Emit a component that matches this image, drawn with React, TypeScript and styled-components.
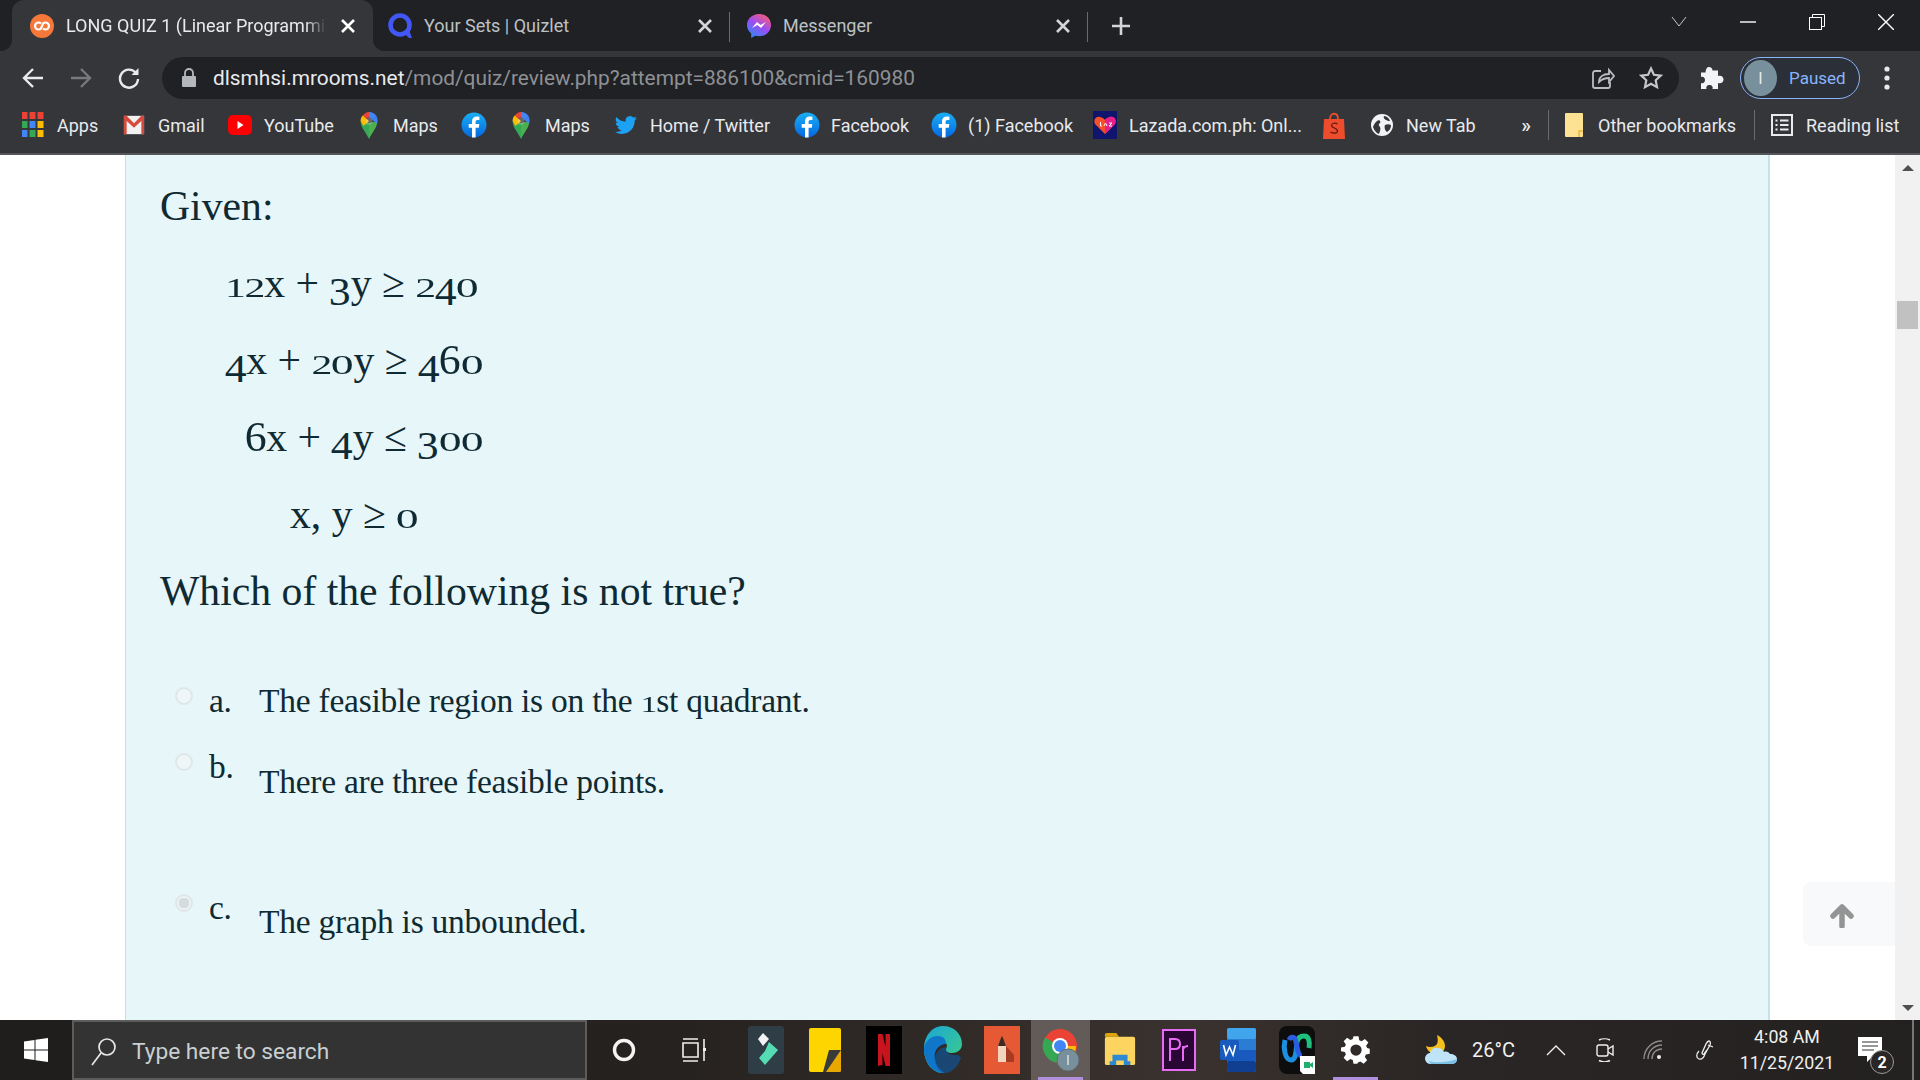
import { ReactNode } from "react";
import styled, { createGlobalStyle } from "styled-components";

const GlobalStyle = createGlobalStyle`
    html, body {
        margin: 0;
        padding: 0;
        background: #fff;
        overflow: hidden;
    }
`;

const UI_FONT = `Roboto, "Liberation Sans", sans-serif`;
const QUIZ_FONT = `"Liberation Serif", serif`;

const Screen = styled.div`
    width: 1920px;
    height: 1080px;
    display: flex;
    flex-direction: column;
    overflow: hidden;
    font-family: ${UI_FONT};
`;

/* ---------- tab strip ---------- */

const TabStrip = styled.div`
    height: 51px;
    flex: none;
    display: flex;
    padding-left: 12px;
    background: #202124;
`;

const Tab = styled.div<{ $width: number; $pad?: number; $active?: boolean; $sep?: boolean }>`
    position: relative;
    width: ${(p) => p.$width}px;
    box-sizing: border-box;
    display: flex;
    align-items: center;
    gap: 12px;
    padding: 0 15px 0 ${(p) => p.$pad ?? 18}px;
    font-size: 18px;
    color: ${(p) => (p.$active ? "#e8eaed" : "#bdc1c6")};
    background: ${(p) => (p.$active ? "#35363a" : "transparent")};
    border-radius: 12px 12px 0 0;

    &::before {
        content: "";
        display: ${(p) => (p.$active ? "block" : "none")};
        position: absolute;
        left: -12px;
        right: -12px;
        bottom: 0;
        height: 12px;
        background:
            radial-gradient(circle at 0 0, transparent 12px, #35363a 12.5px) left bottom / 12px 12px no-repeat,
            radial-gradient(circle at 100% 0, transparent 12px, #35363a 12.5px) right bottom / 12px 12px no-repeat;
    }

    &::after {
        content: "";
        display: ${(p) => (p.$sep ? "block" : "none")};
        position: absolute;
        right: 0;
        top: 12px;
        height: 30px;
        width: 1px;
        background: #6a6b6e;
    }
`;

const TabTitle = styled.div<{ $fade?: boolean }>`
    flex: 1;
    white-space: nowrap;
    overflow: hidden;
    ${(p) =>
        p.$fade &&
        `-webkit-mask-image: linear-gradient(90deg, #000 92%, transparent 100%);
         mask-image: linear-gradient(90deg, #000 92%, transparent 100%);`}
`;

const NewTab = styled.div`
    margin-left: 22px;
    width: 22px;
    display: flex;
    align-items: center;
    justify-content: center;
`;

const Spacer = styled.div`
    flex: 1;
`;

const WinButton = styled.div`
    width: 69px;
    height: 44px;
    display: flex;
    align-items: center;
    justify-content: center;
`;

/* ---------- toolbar ---------- */

const Toolbar = styled.div`
    height: 48px;
    flex: none;
    box-sizing: border-box;
    display: flex;
    padding: 6px 0 0 9px;
    background: #35363a;
`;

const NavButton = styled.div`
    width: 48px;
    height: 42px;
    display: flex;
    align-items: center;
    justify-content: center;
`;

const Omnibox = styled.div`
    width: 1517px;
    height: 42px;
    margin-left: 9px;
    box-sizing: border-box;
    display: flex;
    align-items: center;
    padding: 0 4px 0 19px;
    border-radius: 21px;
    background: #202124;
    font-size: 20.85px;
    white-space: nowrap;
`;

const Url = styled.div`
    margin-left: 16px;
    flex: 1;
    color: #8e9195;

    b {
        font-weight: 400;
        color: #e8eaed;
    }
`;

const Puzzle = styled(NavButton)`
    width: 44px;
    margin-left: 11px;
`;

const ProfilePill = styled.div`
    width: 120px;
    height: 42px;
    margin-left: 6px;
    box-sizing: border-box;
    display: flex;
    align-items: center;
    padding-left: 3px;
    gap: 12px;
    border: 1.5px solid #8ab4f8;
    border-radius: 21px;
    background: #2b3038;
    color: #8ab4f8;
    font-size: 17px;
`;

const Avatar = styled.div`
    width: 33px;
    height: 36px;
    border-radius: 50%;
    background: #78909c;
    color: #e8eaed;
    font-size: 16px;
    display: flex;
    align-items: center;
    justify-content: center;
`;

const MenuButton = styled(NavButton)`
    width: 54px;
`;

/* ---------- bookmarks ---------- */

const BookmarkBar = styled.div`
    height: 56px;
    flex: none;
    box-sizing: border-box;
    display: flex;
    align-items: center;
    padding: 0 0 2px 21px;
    background: #35363a;
    border-bottom: 2px solid #55565a;
    font-size: 18px;
    color: #e8eaed;
    white-space: nowrap;
`;

const Bookmark = styled.div<{ $width?: number; $offset?: number }>`
    width: ${(p) => (p.$width ? `${p.$width}px` : "auto")};
    margin-left: ${(p) => p.$offset ?? 0}px;
    display: flex;
    align-items: center;
    gap: 12px;
    flex: none;
`;

const BookmarkIcon = styled.div`
    width: 24px;
    flex: none;
    display: flex;
    justify-content: center;
`;

const BarSep = styled.div`
    width: 1px;
    height: 30px;
    background: #6a6b6e;
    flex: none;
`;

const Chevrons = styled.div`
    width: 19px;
    margin-right: 17px;
    text-align: right;
    font-size: 20px;
    font-weight: 500;
    line-height: 20px;
`;

/* ---------- page ---------- */

const Page = styled.div`
    position: relative;
    flex: 1;
    min-height: 0;
    display: flex;
    background: #fff;
`;

const Gutter = styled.div<{ $width: number }>`
    width: ${(p) => p.$width}px;
    flex: none;
`;

const Panel = styled.div`
    width: 1645px;
    flex: none;
    box-sizing: border-box;
    padding: 12px 0 0 34px;
    background: #e7f6f8;
    border-left: 1px solid #c4e2e8;
    border-right: 2px solid #c4e2e8;
    color: #0f2a33;
    font-family: ${QUIZ_FONT};
    overflow: hidden;
`;

const QuizLine = styled.div<{ $indent?: number }>`
    height: 77px;
    line-height: 78px;
    font-size: 41.7px;
    padding-left: ${(p) => p.$indent ?? 0}px;
    white-space: nowrap;
`;

const Options = styled.div`
    padding-top: 50px;
`;

const Option = styled.div<{ $height: number }>`
    height: ${(p) => p.$height}px;
    display: flex;
    align-items: flex-start;
    font-size: 33.5px;
    letter-spacing: -0.25px;
    line-height: 43px;
`;

const Radio = styled.div<{ $checked?: boolean }>`
    width: 18px;
    height: 18px;
    box-sizing: border-box;
    margin: 8px 16px 0 15px;
    border-radius: 50%;
    border: 2px solid #dfe6e8;
    background: ${(p) =>
        p.$checked
            ? "radial-gradient(circle, #d5dcde 0 5px, #eef4f5 5.5px)"
            : "#eef6f7"};
    flex: none;
`;

const OptionMark = styled.div`
    width: 50px;
    flex: none;
`;

const OptionText = styled.div<{ $drop?: number }>`
    margin-top: ${(p) => p.$drop ?? 0}px;
    white-space: nowrap;
`;

type NumKind = "zero" | "x" | "down" | "up";

const numShape: Record<NumKind, { width: number; transform: string }> = {
    zero: { width: 0.54, transform: "scale(1.1, 0.68)" },
    x: { width: 0.47, transform: "scale(1, 0.68)" },
    down: { width: 0.51, transform: "translateY(0.2em) scale(1.05, 0.95)" },
    up: { width: 0.51, transform: "scale(1.05, 1)" },
};

// Georgia's figures sit on the x-height, the installed serif has none, so they get reshaped here
const Num = styled.span<{ $kind: NumKind }>`
    display: inline-block;
    line-height: 1;
    text-align: center;
    width: ${(p) => numShape[p.$kind].width}em;
    transform-origin: 50% 83.75%;
    transform: ${(p) => numShape[p.$kind].transform};
`;

const BackToTop = styled.div`
    position: absolute;
    right: 25px;
    top: 727px;
    width: 92px;
    height: 64px;
    box-sizing: border-box;
    padding: 3px 14px 0 0;
    border-radius: 8px 0 0 8px;
    background: #f7f9fa;
    display: flex;
    align-items: center;
    justify-content: center;
`;

const Scrollbar = styled.div`
    width: 25px;
    flex: none;
    background: #f1f1f1;
    display: flex;
    flex-direction: column;
    align-items: center;
    justify-content: space-between;
    position: relative;
    padding: 10px 0 9px;
    box-sizing: border-box;
`;

const ScrollThumb = styled.div`
    position: absolute;
    left: 2px;
    top: 146px;
    width: 21px;
    height: 28px;
    background: #c1c1c1;
`;

/* ---------- taskbar ---------- */

const Taskbar = styled.div`
    height: 60px;
    flex: none;
    display: flex;
    align-items: stretch;
    background: linear-gradient(90deg, #1f1e1d 0%, #262220 35%, #3a322e 62%, #2a2625 75%, #232120 100%);
    color: #f0f0f0;
`;

const StartButton = styled.div`
    width: 72px;
    display: flex;
    align-items: center;
    justify-content: center;
`;

const SearchBox = styled.div`
    width: 515px;
    box-sizing: border-box;
    display: flex;
    align-items: center;
    gap: 15px;
    padding: 3px 0 0 17px;
    background: #333333;
    border: 2px solid #5c5c5c;
    font-size: 22.7px;
    color: #c9cfd2;
`;

const TaskSlot = styled.div<{ $width?: number; $active?: boolean; $running?: boolean }>`
    position: relative;
    width: ${(p) => p.$width ?? 59}px;
    flex: none;
    display: flex;
    align-items: center;
    justify-content: center;
    background: ${(p) => (p.$active ? "#625b57" : "transparent")};

    &::after {
        content: "";
        display: ${(p) => (p.$running ? "block" : "none")};
        position: absolute;
        left: 7px;
        right: 7px;
        bottom: 0;
        height: 3px;
        background: #b08fdc;
    }
`;

const Weather = styled.div`
    margin-left: 39px;
    width: 106px;
    flex: none;
    display: flex;
    align-items: center;
    gap: 14px;
    font-size: 20px;
`;

const Clock = styled.div`
    width: 106px;
    flex: none;
    display: flex;
    flex-direction: column;
    align-items: center;
    justify-content: center;
    gap: 4px;
    font-size: 17.8px;
    line-height: 22px;
`;

const TrayBadge = styled.div`
    position: absolute;
    left: 30px;
    top: 30px;
    width: 24px;
    height: 24px;
    border-radius: 50%;
    box-sizing: border-box;
    border: 1.5px solid #9a9a9a;
    background: #2a2625;
    color: #fff;
    font-size: 16px;
    font-weight: 700;
    display: flex;
    align-items: center;
    justify-content: center;
`;

const EdgeLine = styled.div`
    width: 2px;
    margin-left: 12px;
    background: #77757a;
    flex: none;
`;

/* ---------- icons ---------- */

const FB = () => (
    <svg width="26" height="26" viewBox="0 0 26 26" style={{ flex: "none" }}>
        <defs>
            <linearGradient id="fbg" x1="0" y1="0" x2="0" y2="1">
                <stop offset="0" stopColor="#19aff5" />
                <stop offset="1" stopColor="#0567e0" />
            </linearGradient>
        </defs>
        <circle cx="13" cy="13" r="12.5" fill="url(#fbg)" />
        <path d="M14.6 25.5V15.8h3.2l.5-3.7h-3.7V9.8c0-1.1.4-1.8 1.9-1.8h1.9V4.7c-.5-.1-1.500-.2-2.700-.2-2.800 0-4.700 1.700-4.700 4.800v2.800H7.700v3.700H11v9.700z" fill="#fff" />
    </svg>
);

const MapsPin = () => (
    <svg width="24" height="30" viewBox="0 0 24 32">
        <path d="M12 31C9 24 3 19 3 11.500L12 14z" fill="#34a853" />
        <path d="M12 31c3-7 9-12 9-19.500L12 14z" fill="#4caf50" />
        <path d="M3 11.500C3 9 4 7 5.500 5.500L12 12 6 17z" fill="#fbbc04" />
        <path d="M5.500 5.500C7 3.500 9.500 2 12 2v6a4 4 0 0 0-3 1.300z" fill="#ea4335" />
        <path d="M12 2c4 0 7.300 2.300 8.500 5.500L15 10a4 4 0 0 0-3-2z" fill="#4285f4" />
        <path d="M20.500 7.500c.5 1.200.5 2.500.5 4 0 1-.3 2-.7 3L15 10z" fill="#4285f4" />
        <circle cx="12" cy="12" r="3.800" fill="#fff" fillOpacity="0.25" />
    </svg>
);

const AppsGrid = () => (
    <svg width="22" height="28" viewBox="0 0 22 28">
        {["#ea4335", "#ea4335", "#ea4335", "#34a853", "#4285f4", "#fbbc04", "#4285f4", "#34a853", "#fbbc04"].map((c, i) => (
            <rect key={i} x={(i % 3) * 8 - 0.5} y={Math.floor(i / 3) * 9 + 1} width="6" height="7" fill={c} />
        ))}
    </svg>
);

const Gmail = () => (
    <svg width="22" height="22" viewBox="0 0 24 24">
        <rect x="1" y="2" width="22" height="20" fill="#f2f2f2" />
        <path d="M1 22V3h3v19zM20 22V3h3v19z" fill="#d54c3f" />
        <path d="M1 2h3l8 8 8-8h3v3l-11 10L1 5z" fill="#d54c3f" />
    </svg>
);

const YouTube = () => (
    <svg width="24" height="20" viewBox="0 0 24 20">
        <rect width="24" height="20" rx="5" fill="#f00" />
        <path d="M9.500 6v8l6-4z" fill="#fff" />
    </svg>
);

const Twitter = () => (
    <svg width="24" height="22" viewBox="0 0 24 24">
        <path
            fill="#1da1f2"
            d="M23.900 4.600a9.800 9.800 0 0 1-2.800.8 4.900 4.900 0 0 0 2.100-2.700 9.900 9.900 0 0 1-3.100 1.200 4.900 4.900 0 0 0-8.400 4.500A14 14 0 0 1 1.600 3.200a4.900 4.900 0 0 0 1.500 6.600 4.900 4.900 0 0 1-2.200-.6v.1a4.900 4.900 0 0 0 4 4.800 4.900 4.900 0 0 1-2.200.1 4.900 4.900 0 0 0 4.600 3.400A9.900 9.900 0 0 1 0 19.500a14 14 0 0 0 7.500 2.200c9.100 0 14-7.500 14-14v-.6a10 10 0 0 0 2.400-2.500z"
        />
    </svg>
);

const Lazada = () => (
    <svg width="24" height="28" viewBox="0 0 24 28">
        <rect width="24" height="28" fill="#0f146d" />
        <path d="M12 23 2 13c-2-4 1-8 5-7 2 .4 4 1.500 5 3 1-1.500 3-2.600 5-3 4-1 7 3 5 7z" fill="#f5502a" />
        <path d="M12 23 12 9c1-1.500 3-2.600 5-3 4-1 7 3 5 7z" fill="#e91e8c" />
        <path d="M7.500 11v4h1.500M11 15l1.500-3 1.500 3M16 12h3l-3 3h3" stroke="#fff" strokeWidth="1" fill="none" />
    </svg>
);

const Shopee = () => (
    <svg width="24" height="28" viewBox="0 0 24 28">
        <path d="M8 8c0-7 8-7 8 0" stroke="#ee4d2d" strokeWidth="1.800" fill="none" />
        <path d="M2 8h20l1 20H1z" fill="#ee4d2d" />
        <path d="M15.500 13c-2-1.500-6-1-6 1.500 0 3 6 2 6 5.500 0 2.500-4.500 2.800-7 1" stroke="#5a1a10" strokeWidth="1.200" fill="none" />
    </svg>
);

const Globe = () => (
    <svg width="22" height="22" viewBox="0 0 22 22">
        <circle cx="11" cy="11" r="11" fill="#f1f3f4" />
        <path d="M2 13c1-3 3-6 6-7 1 1 2 2 1 3-2 1-1 3 0 4 1 2 0 4-1 7-3-1-5-4-6-7zM13 2c3 .5 5 2 6 5-2 0-3-.5-4-1s-3-2-2-4zM14 11c2-1 4-1 6 0 0 3-1 5-4 7-2-1-3-5-2-7z" fill="#35363a" />
    </svg>
);

const ReadingList = () => (
    <svg width="22" height="24" viewBox="0 0 22 24" fill="none" stroke="#e8eaed" strokeWidth="2">
        <rect x="1" y="2" width="20" height="20" />
        <path d="M4.500 7.500h2M9 7.500h8.500M4.500 12h2M9 12h8.500M4.500 16.500h2M9 16.500h8.500" />
    </svg>
);

const FolderBookmark = () => (
    <svg width="18" height="24" viewBox="0 0 18 24">
        <path d="M0 1a1 1 0 0 1 1-1h16a1 1 0 0 1 1 1v22a1 1 0 0 1-1 1H1a1 1 0 0 1-1-1z" fill="#fde293" />
        <path d="M14 24v-6h4" fill="none" stroke="#e8b93a" strokeWidth="1.500" />
    </svg>
);

const CloseX = ({ bright }: { bright?: boolean }) => (
    <svg width="20" height="20" viewBox="0 0 20 20" stroke={bright ? "#fff" : "#d3d5d8"} strokeWidth="2.600" fill="none" style={{ flex: "none" }}>
        <path d="M4 4l12 12M16 4L4 16" />
    </svg>
);

const Infinity8 = () => (
    <svg width="24" height="24" viewBox="0 0 24 24" style={{ flex: "none" }}>
        <circle cx="12" cy="12" r="12" fill="#f5783a" />
        <path d="M11 9.500a3.500 3.500 0 1 0 0 5l2-5a3.500 3.500 0 1 1 0 5" fill="none" stroke="#fff" strokeWidth="2.200" />
    </svg>
);

const QuizletQ = () => (
    <svg width="24" height="28" viewBox="0 0 24 28" style={{ flex: "none" }}>
        <circle cx="12" cy="13" r="9.500" fill="none" stroke="#4257f5" strokeWidth="4.600" />
        <path d="M15 20l6 6h3l-3-8z" fill="#4257f5" />
    </svg>
);

const MessengerIcon = () => (
    <svg width="24" height="26" viewBox="0 0 24 26" style={{ flex: "none" }}>
        <defs>
            <linearGradient id="msg" x1="0.2" y1="1" x2="0.8" y2="0">
                <stop offset="0" stopColor="#2a8df8" />
                <stop offset="0.5" stopColor="#9a4df5" />
                <stop offset="1" stopColor="#fb5c74" />
            </linearGradient>
        </defs>
        <path d="M12 1C5 1 0 6 0 12c0 3.500 1.600 6.500 4.200 8.500V25l4-2.200c1.200.3 2.500.5 3.800.5 7 0 12-5 12-11.300S19 1 12 1z" fill="url(#msg)" />
        <path d="M5 15l5-6 3.500 3 5.500-3-5 6-3.500-3z" fill="#fff" />
    </svg>
);

const ChromeShare = () => (
    <svg width="24" height="24" viewBox="0 0 24 24" fill="none" stroke="#b9bcc0" strokeWidth="1.800">
        <path d="M10 5H4a2 2 0 0 0-2 2v13a2 2 0 0 0 2 2h13a2 2 0 0 0 2-2v-4" />
        <path d="M8 16c0-5 4-8 10-8V4l5 6-5 6v-4c-4 0-7 1-10 4z" fill="#202124" />
    </svg>
);

const StarOutline = () => (
    <svg width="24" height="24" viewBox="0 0 24 24" fill="none" stroke="#c4c7ca" strokeWidth="2.200">
        <path d="M12 2.500l2.900 6.300 6.800.8-5 4.700 1.300 6.800L12 17.700l-6 3.400 1.300-6.800-5-4.700 6.800-.8z" />
    </svg>
);

const PuzzleIcon = () => (
    <svg width="24" height="24" viewBox="0 0 24 24" fill="#f1f3f4">
        <path d="M9 1c2 0 3.500 1.500 3.500 3.500H18v5.500c3-1 5.500.5 5.500 3.500S21 18 18 17v6h-5.500c.8-2.500-1-4-3-4s-3.800 1.500-3 4H1v-6c2.500.8 4-1 4-3s-1.500-3.800-4-3V6.500h4.500C5.500 3 7 1 9 1z" />
    </svg>
);

const Windows = () => (
    <svg width="24" height="24" viewBox="0 0 24 24" fill="#fff">
        <path d="M0 3.500l10.500-1.500v9.500H0zM11.500 1.800L24 0v11.500H11.500zM0 12.500h10.500V22L0 20.500zM11.500 12.500H24V24l-12.500-1.800z" />
    </svg>
);

const SearchGlass = () => (
    <svg width="26" height="30" viewBox="0 0 26 30" fill="none" stroke="#e6e6e6" strokeWidth="1.700">
        <circle cx="16" cy="10" r="8" />
        <path d="M10 16L1 28" />
    </svg>
);

const TaskView = () => (
    <svg width="26" height="26" viewBox="0 0 26 26" fill="none" stroke="#f0f0f0" strokeWidth="1.600">
        <path d="M1 2h15M1 24h15M1 6h15v14H1zM22 2v22" />
        <rect x="21" y="11" width="3" height="3" fill="#f0f0f0" stroke="none" />
    </svg>
);

const Filmora = () => (
    <svg width="36" height="48" viewBox="0 0 36 48">
        <rect width="36" height="48" rx="3" fill="#2e3d46" />
        <path d="M15 7l6 6-6 7-5-7z" fill="#f4f4f4" />
        <path d="M21 16l9 8-13 15-6-7 6-7z" fill="#55dcb4" />
    </svg>
);

const StickyNotes = () => (
    <svg width="32" height="44" viewBox="0 0 32 44">
        <rect width="32" height="44" rx="2" fill="#ffd500" />
        <path d="M32 22v20a2 2 0 0 1-2 2H17z" fill="#e8a800" />
        <path d="M14 44l6-22h12L17 44z" fill="#3a3a38" />
    </svg>
);

const Netflix = () => (
    <svg width="36" height="48" viewBox="0 0 36 48">
        <rect width="36" height="48" fill="#000" />
        <path d="M12 8h4.500l7.500 32h-4.500zM12 8h4.500v31l-4.500 1zM19.500 8H24v32h-4.500z" fill="#c8141c" />
    </svg>
);

const Edge = () => (
    <svg width="38" height="48" viewBox="0 0 38 48">
        <defs>
            <linearGradient id="edg" x1="0" y1="0" x2="1" y2="1">
                <stop offset="0" stopColor="#1ba5d8" />
                <stop offset="1" stopColor="#3fd27e" />
            </linearGradient>
        </defs>
        <path d="M19 0c11 0 19 8 19 18 0 6-5 9-10 9-4 0-7-2-6-4 2-3 1-8-5-8-7 0-11 6-11 13 0 9 6 17 13 19C8 47 0 36 0 23 0 10 8 0 19 0z" fill="url(#edg)" />
        <path d="M0 23c0-5 5-13 14-13 6 0 8 4 8 8-4 0-13 4-11 15 1 7 6 12 10 14-12 1-21-11-21-24z" fill="#0f76c9" />
        <path d="M37 32c-3 9-10 15-16 15-6-1-10-7-10-14 0-6 5-12 11-12-1 5 4 8 8 8 3 0 5-1 7 3z" fill="#0c5aa6" fillOpacity="0.6" />
    </svg>
);

const Sketchbook = () => (
    <svg width="36" height="48" viewBox="0 0 36 48">
        <rect width="36" height="48" fill="#e55a34" />
        <path d="M14 36V20l4-8 4 8v16z" fill="#f3d4bc" />
        <path d="M17 12l1-2 1 2 3 8h-8z" fill="#3a2a22" />
        <path d="M22 20l8 9v7h-8z" fill="#a33c22" />
    </svg>
);

const ChromeRunning = () => (
    <svg width="38" height="48" viewBox="0 0 38 48">
        <circle cx="18" cy="20" r="17" fill="#ea4335" />
        <path d="M18 20L3 11.500A17 17 0 0 0 18 37l8-13z" fill="#34a853" />
        <path d="M18 20h16a17 17 0 0 1-16 17z" fill="#fbbc04" />
        <circle cx="18" cy="20" r="8" fill="#fff" />
        <circle cx="18" cy="20" r="6" fill="#4285f4" />
        <circle cx="26" cy="34" r="11" fill="#78909c" stroke="#5d6b73" />
        <path d="M26 29v10" stroke="#d5dadd" strokeWidth="1.600" />
    </svg>
);

const Explorer = () => (
    <svg width="32" height="34" viewBox="0 0 32 36">
        <path d="M0 2a2 2 0 0 1 2-2h10l3 4H0z" fill="#e0a40a" />
        <rect y="4" width="32" height="30" rx="2" fill="#fdd45f" />
        <path d="M5 34v-4h3v-7h16v7h3v4H20v-5h-8v5z" fill="#2d8ad2" />
    </svg>
);

const Premiere = () => (
    <svg width="34" height="42" viewBox="0 0 34 42">
        <rect x="1" y="1" width="32" height="40" fill="#2a0634" stroke="#e66cf5" strokeWidth="2" />
        <path d="M8 32V10h5c4 0 5 2 5 5s-1 5-5 5H8M21 32V17M21 20c1-2 3-3 5-3" fill="none" stroke="#e66cf5" strokeWidth="2" />
    </svg>
);

const Word = () => (
    <svg width="36" height="44" viewBox="0 0 36 44">
        <rect x="7" y="0" width="29" height="44" rx="2" fill="#2b7cd3" />
        <rect x="7" y="0" width="29" height="11" rx="2" fill="#41a5ee" />
        <rect x="7" y="22" width="29" height="11" fill="#185abd" />
        <rect x="7" y="33" width="29" height="11" rx="2" fill="#103f91" />
        <rect x="0" y="12" width="19" height="20" rx="2" fill="#185abd" />
        <path d="M3.500 17l2.500 10 3.500-8 3.500 8 2.500-10" stroke="#fff" strokeWidth="1.600" fill="none" />
    </svg>
);

const Webex = () => (
    <svg width="36" height="48" viewBox="0 0 36 48">
        <rect width="36" height="48" rx="8" fill="#0d0d0d" />
        <path d="M6 14c-2 8 0 20 6 20s5-12 6-18" fill="none" stroke="#1d8fe0" strokeWidth="5" />
        <path d="M18 16c1-5 4-6 7-6 5 0 6 6 5 12" fill="none" stroke="#1fbf7f" strokeWidth="5" />
        <path d="M10 14c2-4 6-4 7 2 1 5 2 14 6 14" fill="none" stroke="#2a5ce0" strokeWidth="5" />
        <path d="M21 30h15v18H24l-3-3z" fill="#fff" />
        <path d="M25 36h6v6h-6zM31 38l3-2v6l-3-2z" fill="#1fae6d" />
    </svg>
);

const Gear = () => (
    <svg width="30" height="30" viewBox="0 0 24 24">
        <path
            fill="#fff"
            fillRule="evenodd"
            d="M10 1h4l.6 3.100 1.900.8 2.600-1.800 2.800 2.800-1.800 2.600.8 1.900L23 11v4l-3.100.6-.8 1.900 1.800 2.600-2.800 2.800-2.600-1.800-1.900.8L13 23h-3l-.6-3.100-1.900-.8-2.600 1.800-2.800-2.800 1.800-2.600-.8-1.900L0 13V10l3.100-.6.800-1.900L2.100 4.900l2.800-2.800 2.600 1.800 1.900-.8zM12 7.500a4.500 4.500 0 1 0 0 9 4.500 4.500 0 0 0 0-9z"
        />
    </svg>
);

const WeatherIcon = () => (
    <svg width="34" height="30" viewBox="0 0 34 30">
        <path d="M2 11c4 2 9 1 11-2 1-2 1-5 0-9 4 2 8 6 8 11 0 6-6 9-11 8-4-1-7-4-8-8z" fill="#f4c01e" />
        <path d="M7 29a5.500 5.500 0 0 1-1-11c1-4 4-6 8-5 3 0 5 2 6 4 2-1 5 0 6 2 4 0 7 2 7 5s-2 5-6 5z" fill="#bfe3f7" />
        <path d="M7 29a6 6 0 0 1-2-3c5 2 18 2 28-2 0 3-3 5-6 5z" fill="#7cc0e6" />
    </svg>
);

const Notifications = () => (
    <svg width="24" height="26" viewBox="0 0 24 26" fill="#fff">
        <path d="M0 0h24v19H15l-6 6v-6H0z" />
        <path d="M4 5h16M4 9h16M4 13h12" stroke="#333" strokeWidth="1.200" />
    </svg>
);

const numKind = (digit: string): NumKind => {
    if (digit === "0") return "zero";
    if ("12".includes(digit)) return "x";
    return "68".includes(digit) ? "up" : "down";
};

const toOldStyle = (text: string): ReactNode[] =>
    text.split("").map((ch, i) =>
        /[0-9]/.test(ch) ? (
            <Num key={i} $kind={numKind(ch)}>
                {ch}
            </Num>
        ) : (
            ch
        )
    );

const bookmarks: { icon: ReactNode; label?: string; width: number }[] = [
    { icon: <AppsGrid />, label: "Apps", width: 101 },
    { icon: <Gmail />, label: "Gmail", width: 106 },
    { icon: <YouTube />, label: "YouTube", width: 129 },
    { icon: <MapsPin />, label: "Maps", width: 105 },
    { icon: <FB />, width: 47 },
    { icon: <MapsPin />, label: "Maps", width: 105 },
    { icon: <Twitter />, label: "Home / Twitter", width: 181 },
    { icon: <FB />, label: "Facebook", width: 137 },
    { icon: <FB />, label: "(1) Facebook", width: 161 },
    { icon: <Lazada />, label: "Lazada.com.ph: Onl...", width: 229 },
    { icon: <Shopee />, width: 48 },
    { icon: <Globe />, label: "New Tab", width: 142 },
];

const pinned: { icon: ReactNode; active?: boolean; running?: boolean }[] = [
    { icon: <Filmora /> },
    { icon: <StickyNotes /> },
    { icon: <Netflix /> },
    { icon: <Edge /> },
    { icon: <Sketchbook /> },
    { icon: <ChromeRunning />, active: true, running: true },
    { icon: <Explorer /> },
    { icon: <Premiere /> },
    { icon: <Word /> },
    { icon: <Webex /> },
    { icon: <Gear />, running: true },
];

export default function App() {
    return (
        <Screen>
            <GlobalStyle />
            <TabStrip>
                <Tab $width={361} $active>
                    <Infinity8 />
                    <TabTitle $fade>LONG QUIZ 1 (Linear Programmi</TabTitle>
                    <CloseX bright />
                </Tab>
                <Tab $width={357} $pad={15} $sep>
                    <QuizletQ />
                    <TabTitle>Your Sets | Quizlet</TabTitle>
                    <CloseX />
                </Tab>
                <Tab $width={358} $pad={17} $sep>
                    <MessengerIcon />
                    <TabTitle>Messenger</TabTitle>
                    <CloseX />
                </Tab>
                <NewTab>
                    <svg width="20" height="20" viewBox="0 0 20 20" stroke="#d3d5d8" strokeWidth="2.600">
                        <path d="M10 1v18M1 10h18" />
                    </svg>
                </NewTab>
                <Spacer />
                <WinButton>
                    <svg width="16" height="12" viewBox="0 0 16 12" fill="none" stroke="#c8c8c8">
                        <path d="M1 1l7 9 7-9" />
                    </svg>
                </WinButton>
                <WinButton>
                    <svg width="16" height="2" viewBox="0 0 16 2" stroke="#fff" strokeWidth="1.400">
                        <path d="M0 1h16" />
                    </svg>
                </WinButton>
                <WinButton>
                    <svg width="16" height="16" viewBox="0 0 16 16" fill="none" stroke="#fff">
                        <rect x="0.5" y="3.5" width="12" height="12" />
                        <path d="M3.500 3.500v-3h12v12h-3" />
                    </svg>
                </WinButton>
                <WinButton>
                    <svg width="16" height="16" viewBox="0 0 16 16" stroke="#fff" strokeWidth="1.400">
                        <path d="M0 0l16 16M16 0L0 16" />
                    </svg>
                </WinButton>
            </TabStrip>
            <Toolbar>
                <NavButton>
                    <svg width="22" height="22" viewBox="0 0 22 22" fill="none" stroke="#e8eaed" strokeWidth="2.400">
                        <path d="M21 11H2M11 2l-9 9 9 9" />
                    </svg>
                </NavButton>
                <NavButton>
                    <svg width="22" height="22" viewBox="0 0 22 22" fill="none" stroke="#77797c" strokeWidth="2.400">
                        <path d="M1 11h19M11 2l9 9-9 9" />
                    </svg>
                </NavButton>
                <NavButton>
                    <svg width="22" height="22" viewBox="0 0 22 22" fill="none" stroke="#e8eaed" strokeWidth="2.400">
                        <path d="M18 6a9 9 0 1 0 2 6" />
                        <path d="M20.500 1v7h-7" fill="#e8eaed" stroke="none" />
                    </svg>
                </NavButton>
                <Omnibox>
                    <svg width="16" height="20" viewBox="0 0 16 20" fill="#b4b7bb" style={{ flex: "none" }}>
                        <path d="M2 8h12a1 1 0 0 1 1 1v9a1 1 0 0 1-1 1H2a1 1 0 0 1-1-1V9a1 1 0 0 1 1-1z" />
                        <path d="M4 8V5a4 4 0 0 1 8 0v3" fill="none" stroke="#b4b7bb" strokeWidth="1.800" />
                    </svg>
                    <Url>
                        <b>dlsmhsi.mrooms.net</b>/mod/quiz/review.php?attempt=886100&amp;cmid=160980
                    </Url>
                    <NavButton>
                        <ChromeShare />
                    </NavButton>
                    <NavButton>
                        <StarOutline />
                    </NavButton>
                </Omnibox>
                <Puzzle>
                    <PuzzleIcon />
                </Puzzle>
                <ProfilePill>
                    <Avatar>I</Avatar>
                    Paused
                </ProfilePill>
                <MenuButton>
                    <svg width="6" height="24" viewBox="0 0 6 24" fill="#e8eaed">
                        <circle cx="3" cy="3" r="2.600" />
                        <circle cx="3" cy="12" r="2.600" />
                        <circle cx="3" cy="21" r="2.600" />
                    </svg>
                </MenuButton>
            </Toolbar>
            <BookmarkBar>
                {bookmarks.map((b, i) => (
                    <Bookmark key={i} $width={b.width}>
                        <BookmarkIcon>{b.icon}</BookmarkIcon>
                        {b.label && <span>{b.label}</span>}
                    </Bookmark>
                ))}
                <Chevrons>»</Chevrons>
                <BarSep />
                <Bookmark $width={192} $offset={13}>
                    <BookmarkIcon>
                        <FolderBookmark />
                    </BookmarkIcon>
                    <span>Other bookmarks</span>
                </Bookmark>
                <BarSep />
                <Bookmark $offset={15}>
                    <BookmarkIcon>
                        <ReadingList />
                    </BookmarkIcon>
                    <span>Reading list</span>
                </Bookmark>
            </BookmarkBar>
            <Page>
                <Gutter $width={125} />
                <Panel>
                    <QuizLine>Given:</QuizLine>
                    <QuizLine $indent={65}>{toOldStyle("12x + 3y ≥ 240")}</QuizLine>
                    <QuizLine $indent={65}>{toOldStyle("4x + 20y ≥ 460")}</QuizLine>
                    <QuizLine $indent={85}>{toOldStyle("6x + 4y ≤ 300")}</QuizLine>
                    <QuizLine $indent={130}>{toOldStyle("x, y ≥ 0")}</QuizLine>
                    <QuizLine>Which of the following is not true?</QuizLine>
                    <Options>
                        <Option $height={66}>
                            <Radio />
                            <OptionMark>a.</OptionMark>
                            <OptionText>{toOldStyle("The feasible region is on the 1st quadrant.")}</OptionText>
                        </Option>
                        <Option $height={141}>
                            <Radio />
                            <OptionMark>b.</OptionMark>
                            <OptionText $drop={15}>There are three feasible points.</OptionText>
                        </Option>
                        <Option $height={80}>
                            <Radio $checked />
                            <OptionMark>c.</OptionMark>
                            <OptionText $drop={14}>The graph is unbounded.</OptionText>
                        </Option>
                    </Options>
                </Panel>
                <Gutter $width={125} />
                <Scrollbar>
                    <svg width="12" height="6" viewBox="0 0 12 6" fill="#505050">
                        <path d="M6 0l6 6H0z" />
                    </svg>
                    <ScrollThumb />
                    <svg width="12" height="6" viewBox="0 0 12 6" fill="#505050">
                        <path d="M0 0h12L6 6z" />
                    </svg>
                </Scrollbar>
                <BackToTop>
                    <svg width="24" height="24" viewBox="0 0 24 24" fill="none" stroke="#949494" strokeWidth="5.500" strokeLinejoin="round" strokeLinecap="round">
                        <path d="M3 12l9-9 9 9M12 4v18" />
                    </svg>
                </BackToTop>
            </Page>
            <Taskbar>
                <StartButton>
                    <Windows />
                </StartButton>
                <SearchBox>
                    <SearchGlass />
                    Type here to search
                </SearchBox>
                <TaskSlot $width={74}>
                    <svg width="24" height="24" viewBox="0 0 24 24" fill="none" stroke="#f4f4f4" strokeWidth="3.400">
                        <circle cx="12" cy="12" r="9.500" />
                    </svg>
                </TaskSlot>
                <TaskSlot $width={68}>
                    <TaskView />
                </TaskSlot>
                <Gutter $width={7} />
                {pinned.map((p, i) => (
                    <TaskSlot key={i} $active={p.active} $running={p.running}>
                        {p.icon}
                    </TaskSlot>
                ))}
                <Weather>
                    <WeatherIcon />
                    26°C
                </Weather>
                <TaskSlot $width={52}>
                    <svg width="20" height="12" viewBox="0 0 20 12" fill="none" stroke="#f0f0f0" strokeWidth="1.400">
                        <path d="M1 11l9-9 9 9" />
                    </svg>
                </TaskSlot>
                <TaskSlot $width={46}>
                    <svg width="18" height="24" viewBox="0 0 18 24" fill="none" stroke="#f0f0f0" strokeWidth="1.400">
                        <rect x="1" y="7" width="11" height="11" rx="2" />
                        <path d="M12 11l5-3v9l-5-3M3 2c3-1.500 8-1.500 11 0M3 22.500c3 1.500 8 1.500 11 0" />
                    </svg>
                </TaskSlot>
                <TaskSlot $width={50}>
                    <svg width="20" height="20" viewBox="0 0 20 20" fill="none" stroke="#8b8b8b" strokeWidth="1.400">
                        <path d="M1 19C1 9 9 1 19 1M5 19C5 11 11 5 19 5M9 19c0-6 4-10 10-10" />
                        <circle cx="16" cy="17" r="2" fill="#f0f0f0" stroke="none" />
                    </svg>
                </TaskSlot>
                <TaskSlot $width={56}>
                    <svg width="22" height="22" viewBox="0 0 22 22" fill="none" stroke="#f0f0f0" strokeWidth="1.300">
                        <path d="M4 12c-3 3-3 7 0 8s5-2 6-5l5-9c1-2 0-4-1-4s-2 1-3 3l-4 9c0 1 1 2 2 1l3-4M13 6l5 2" />
                    </svg>
                </TaskSlot>
                <Clock>
                    <span>4:08 AM</span>
                    <span>11/25/2021</span>
                </Clock>
                <TaskSlot $width={60}>
                    <Notifications />
                    <TrayBadge>2</TrayBadge>
                </TaskSlot>
                <EdgeLine />
            </Taskbar>
        </Screen>
    );
}
